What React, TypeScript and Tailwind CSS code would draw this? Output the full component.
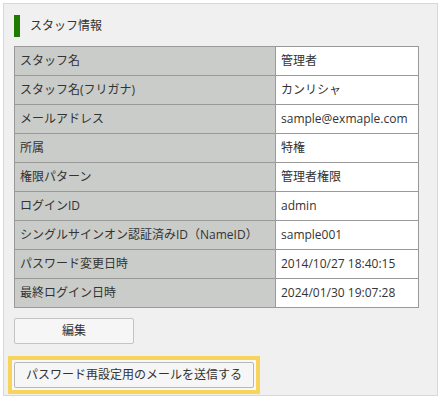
import React from "react";

const rows: [string, string][] = [
  ["スタッフ名", "管理者"],
  ["スタッフ名(フリガナ)", "カンリシャ"],
  ["メールアドレス", "sample@exmaple.com"],
  ["所属", "特権"],
  ["権限パターン", "管理者権限"],
  ["ログインID", "admin"],
  ["シングルサインオン認証済みID（NameID）", "sample001"],
  ["パスワード変更日時", "2014/10/27 18:40:15"],
  ["最終ログイン日時", "2024/01/30 19:07:28"],
];

export default function App() {
  return (
    <div
      className="w-[444px] h-[398px] bg-white pt-[3px] pl-[3px] text-[12px] text-[#333]"
      style={{ fontFamily: '"Open Sans", "Noto Sans CJK JP", sans-serif' }}
    >
      <div className="w-[435px] h-[393px] border border-[#d8d8d8] bg-[#eff0ef] pl-[10px] pt-[11px]">
        <div className="flex items-center h-[22px]">
          <div className="w-[6px] h-[22px] bg-[#1f7a00]" />
          <span className="ml-[10px] leading-none">スタッフ情報</span>
        </div>
        <div className="mt-[9px] w-[405px] border-l border-t border-[#999] grid grid-cols-[261px_143px]">
          {rows.map(([k, v]) => (
            <React.Fragment key={k}>
              <div className="h-[29px] border-r border-b border-[#999] bg-[#c9ccc9] pl-[5px] flex items-center whitespace-nowrap">
                {k}
              </div>
              <div className="h-[29px] border-r border-b border-[#999] bg-white pl-[5px] flex items-center whitespace-nowrap">
                {v}
              </div>
            </React.Fragment>
          ))}
        </div>
        <button className="mt-[10px] w-[120px] h-[26px] border border-[#c4c4c4] rounded-[2px] bg-[#f5f6f5] flex items-center justify-center text-[12px] text-[#333]">
          編集
        </button>
        <div className="mt-[12px] -ml-[6px] w-[252px] h-[38px] bg-[#f8d45c] p-[4px]">
          <div className="w-full h-full bg-[#f7f8f7] p-[2px]">
            <button className="w-full h-full border border-[#b8b8b8] rounded-[2px] bg-[#f5f6f5] flex items-center justify-center text-[12px] text-[#333]">
              パスワード再設定用のメールを送信する
            </button>
          </div>
        </div>
      </div>
    </div>
  );
}
